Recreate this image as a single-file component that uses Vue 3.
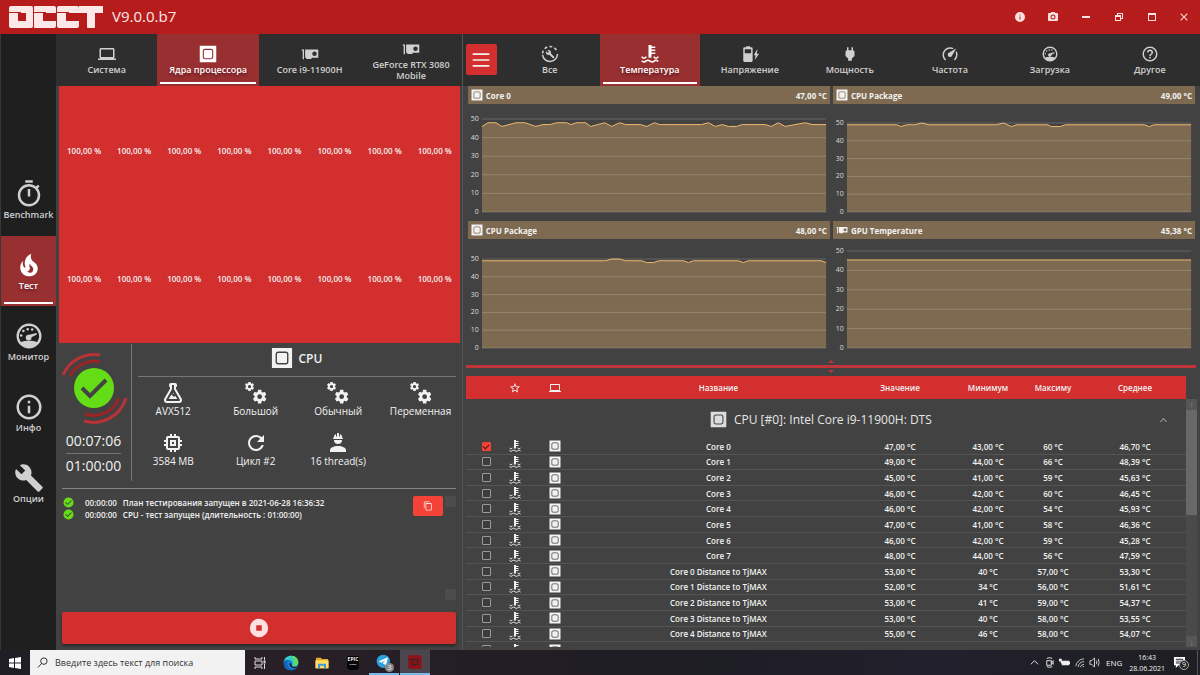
<script setup>
import { h } from 'vue'

const paths = {
  laptop: 'M4,6H20V16H4M20,18A2,2 0 0,0 22,16V6C22,4.89 21.1,4 20,4H4C2.89,4 2,4.89 2,6V16A2,2 0 0,0 4,18H0V20H24V18H20Z',
  card: 'M1,6V7.5H2.2V19H4V6M5.5,6V17H7V18.5H14V17H23V6H5.500M18,8.500A3,3 0 0,1 18,14.500A3,3 0 0,1 18,8.500Z',
  menu: 'M2,4H22V6H2ZM2,11H22V13H2ZM2,18H22V20H2Z',
  plug: 'M16,7V3H14V7H10V3H8V7H8C7,7 6,8 6,9V14.5L9.5,18V21H14.5V18L18,14.5V9C18,8 17,7 16,7Z',
  speed: 'M12,16A3,3 0 0,1 9,13C9,11.88 9.61,10.9 10.5,10.39L20.21,4.77L14.68,14.35C14.18,15.33 13.17,16 12,16M12,3C13.81,3 15.5,3.5 16.97,4.32L14.87,5.53C14,5.19 13,5 12,5A8,8 0 0,0 4,13C4,15.21 4.89,17.21 6.34,18.65H6.35C6.74,19.04 6.74,19.67 6.35,20.06C5.96,20.45 5.32,20.45 4.93,20.07V20.07C3.12,18.26 2,15.76 2,13A10,10 0 0,1 12,3M22,13C22,15.76 20.88,18.26 19.07,20.07V20.07C18.68,20.45 18.05,20.45 17.66,20.06C17.27,19.67 17.27,19.04 17.66,18.65V18.65C19.11,17.2 20,15.21 20,13C20,12 19.81,11 19.46,10.1L20.67,8C21.5,9.5 22,11.18 22,13Z',
  help: 'M11,18H13V16H11V18M12,2A10,10 0 0,0 2,12A10,10 0 0,0 12,22A10,10 0 0,0 22,12A10,10 0 0,0 12,2M12,20C7.59,20 4,16.41 4,12C4,7.59 7.59,4 12,4C16.41,4 20,7.59 20,12C20,16.41 16.41,20 12,20M12,6A4,4 0 0,0 8,10H10A2,2 0 0,1 12,8A2,2 0 0,1 14,10C14,12 11,11.75 11,15H13C13,12.75 16,12.5 16,10A4,4 0 0,0 12,6Z',
  battery: 'M5,3H7V1.500H12V3H14A1.500,1.500 0 0,1 15.500,4.500V21A1.500,1.500 0 0,1 14,22.500H4.500A1.500,1.500 0 0,1 3,21V4.500A1.500,1.500 0 0,1 4.500,3M5,5.500V11H13.500V5.500ZM22,5L17,13.500H19.500L18.500,20L24,11.500H21Z',
  fire: 'M17.66 11.2C17.43 10.9 17.15 10.64 16.89 10.38C16.22 9.78 15.46 9.35 14.82 8.72C13.33 7.26 13 4.85 13.95 3C13 3.23 12.17 3.75 11.46 4.32C8.87 6.4 7.85 10.07 9.07 13.22C9.11 13.32 9.15 13.42 9.15 13.55C9.15 13.77 9 13.97 8.8 14.05C8.57 14.15 8.33 14.09 8.14 13.93C8.08 13.88 8.04 13.83 8 13.76C6.87 12.33 6.69 10.28 7.45 8.64C5.78 10 4.87 12.3 5 14.47C5.06 14.97 5.12 15.47 5.29 15.97C5.43 16.57 5.7 17.17 6 17.7C7.08 19.43 8.95 20.67 10.96 20.92C13.1 21.19 15.39 20.8 17.03 19.32C18.86 17.66 19.5 15 18.56 12.72L18.43 12.46C18.22 12 17.66 11.2 17.66 11.2M14.5 17.5C14.22 17.74 13.76 18 13.4 18.1C12.28 18.5 11.16 17.94 10.5 17.28C11.69 17 12.4 16.12 12.61 15.23C12.78 14.43 12.46 13.77 12.33 13C12.21 12.26 12.23 11.63 12.5 10.94C12.69 11.32 12.89 11.7 13.13 12C13.9 13 15.11 13.44 15.37 14.8C15.41 14.94 15.43 15.08 15.43 15.23C15.46 16.05 15.1 16.95 14.5 17.5Z',
  timer: 'M12,20A7,7 0 0,1 5,13A7,7 0 0,1 12,6A7,7 0 0,1 19,13A7,7 0 0,1 12,20M19.03,7.39L20.45,5.97C20,5.46 19.55,5 19.04,4.56L17.62,6C16.07,4.74 14.12,4 12,4A9,9 0 0,0 3,13A9,9 0 0,0 12,22C17,22 21,17.97 21,13C21,10.88 20.26,8.93 19.03,7.39M11,14H13V8H11M15,1H9V3H15V1Z',
  wrench: 'M22.7,19L13.6,9.9C14.5,7.6 14,4.9 12.1,3C10.1,1 7.1,0.6 4.7,1.7L9,6L6,9L1.6,4.7C0.4,7.1 0.9,10.1 2.9,12.1C4.8,14 7.5,14.5 9.8,13.6L18.9,22.7C19.3,23.1 19.9,23.1 20.3,22.7L22.6,20.4C23.1,20 23.1,19.3 22.7,19Z',
  infoOutline: 'M11,9H13V7H11M12,20C7.59,20 4,16.41 4,12C4,7.59 7.59,4 12,4C16.41,4 20,7.59 20,12C20,16.41 16.41,20 12,20M12,2A10,10 0 0,0 2,12A10,10 0 0,0 12,22A10,10 0 0,0 22,12A10,10 0 0,0 12,2M11,17H13V11H11V17Z',
  info: 'M13,9H11V7H13M13,17H11V11H13M12,2A10,10 0 0,0 2,12A10,10 0 0,0 12,22A10,10 0 0,0 22,12A10,10 0 0,0 12,2Z',
  camera: 'M4,4H7L9,2H15L17,4H20A2,2 0 0,1 22,6V18A2,2 0 0,1 20,20H4A2,2 0 0,1 2,18V6A2,2 0 0,1 4,4M12,7A5,5 0 0,0 7,12A5,5 0 0,0 12,17A5,5 0 0,0 17,12A5,5 0 0,0 12,7M12,9A3,3 0 0,1 15,12A3,3 0 0,1 12,15A3,3 0 0,1 9,12A3,3 0 0,1 12,9Z',
  minimize: 'M20,14H4V10H20Z',
  restore: 'M4,8H8V4H20V16H16V20H4V8M16,8V14H18V6H10V8H16M6,12V18H14V12H6Z',
  maximize: 'M4,4H20V20H4V4M6,8V18H18V8H6Z',
  close: 'M13.46,12L19,17.54V19H17.54L12,13.46L6.46,19H5V17.54L10.54,12L5,6.46V5H6.46L12,10.54L17.54,5H19V6.46L13.46,12Z',
  cog: 'M12,15.5A3.5,3.5 0 0,1 8.5,12A3.5,3.5 0 0,1 12,8.5A3.5,3.5 0 0,1 15.5,12A3.5,3.5 0 0,1 12,15.5M19.43,12.97C19.47,12.65 19.5,12.33 19.5,12C19.5,11.67 19.47,11.34 19.43,11L21.54,9.37C21.73,9.22 21.78,8.95 21.66,8.73L19.66,5.27C19.54,5.05 19.27,4.96 19.05,5.05L16.56,6.05C16.04,5.66 15.5,5.32 14.87,5.07L14.5,2.42C14.46,2.18 14.25,2 14,2H10C9.75,2 9.54,2.18 9.5,2.42L9.13,5.07C8.5,5.32 7.96,5.66 7.44,6.05L4.95,5.05C4.73,4.96 4.46,5.05 4.34,5.27L2.34,8.73C2.21,8.95 2.27,9.22 2.46,9.37L4.57,11C4.53,11.34 4.5,11.67 4.5,12C4.5,12.33 4.53,12.65 4.57,12.97L2.46,14.63C2.27,14.78 2.21,15.05 2.34,15.27L4.34,18.73C4.46,18.95 4.73,19.03 4.95,18.95L7.44,17.94C7.96,18.34 8.5,18.68 9.13,18.93L9.5,21.58C9.54,21.82 9.75,22 10,22H14C14.25,22 14.46,21.82 14.5,21.58L14.87,18.93C15.5,18.67 16.04,18.34 16.56,17.94L19.05,18.95C19.27,19.03 19.54,18.95 19.66,18.73L21.66,15.27C21.78,15.05 21.73,14.78 21.54,14.63L19.43,12.97Z',
  flask: 'M5,19A1,1 0 0,0 6,20H18A1,1 0 0,0 19,19C19,18.79 18.93,18.59 18.82,18.43L13,8.35V4H11V8.35L5.18,18.43C5.07,18.59 5,18.79 5,19M6,22A3,3 0 0,1 3,19C3,18.4 3.18,17.84 3.5,17.37L9,7.81V6A1,1 0 0,1 8,5V4A2,2 0 0,1 10,2H14A2,2 0 0,1 16,4V5A1,1 0 0,1 15,6V7.81L20.5,17.37C20.82,17.84 21,18.4 21,19A3,3 0 0,1 18,22H6M13,16L14.34,14.66L16.27,18H7.73L10.39,13.39L13,16M12.5,12A0.5,0.5 0 0,1 13,12.5A0.5,0.5 0 0,1 12.5,13A0.5,0.5 0 0,1 12,12.5A0.5,0.5 0 0,1 12.5,12Z',
  chip: 'M17,17H7V7H17M21,11V9H19V7C19,5.89 18.1,5 17,5H15V3H13V5H11V3H9V5H7C5.89,5 5,5.89 5,7V9H3V11H5V13H3V15H5V17A2,2 0 0,0 7,19H9V21H11V19H13V21H15V19H17A2,2 0 0,0 19,17V15H21V13H19V11M13,13H11V11H13M15,9H9V15H15V9Z',
  refresh: 'M17.65,6.35C16.2,4.9 14.21,4 12,4A8,8 0 0,0 4,12A8,8 0 0,0 12,20C15.73,20 18.84,17.45 19.73,14H17.65C16.83,16.33 14.61,18 12,18A6,6 0 0,1 6,12A6,6 0 0,1 12,6C13.66,6 15.14,6.69 16.22,7.78L13,11H20V4L17.65,6.35Z',
  worker: 'M12,15C7.58,15 4,16.79 4,19V21H20V19C20,16.79 16.42,15 12,15M8,9A4,4 0 0,0 12,13A4,4 0 0,0 16,9M11.5,2C11.2,2 11,2.21 11,2.5V5.5H10V3C10,3 7.75,3.86 7.75,6.75C7.75,6.75 7,6.89 7,8H17C16.95,6.89 16.25,6.75 16.25,6.75C16.25,3.86 14,3 14,3V5.5H13V2.5C13,2.21 12.81,2 12.5,2H11.5Z',
  star: 'M12,15.39L8.24,17.66L9.23,13.38L5.91,10.5L10.29,10.13L12,6.09L13.71,10.13L18.09,10.5L14.77,13.38L15.76,17.66M22,9.24L14.81,8.63L12,2L9.19,8.63L2,9.24L7.45,13.97L5.82,21L12,17.27L18.18,21L16.54,13.97L22,9.24Z',
  copy: 'M19,21H8V7H19M19,5H8A2,2 0 0,0 6,7V21A2,2 0 0,0 8,23H19A2,2 0 0,0 21,21V7A2,2 0 0,0 19,5M16,1H4A2,2 0 0,0 2,3V17H4V3H16V1Z',
  stop: 'M12,2A10,10 0 0,0 2,12A10,10 0 0,0 12,22A10,10 0 0,0 22,12A10,10 0 0,0 12,2M9,9H15V15H9Z',
  cpu: 'M1,1H23V23H1ZM8,5A3,3 0 0,0 5,8V16A3,3 0 0,0 8,19H16A3,3 0 0,0 19,16V8A3,3 0 0,0 16,5ZM8,6.500H16A1.500,1.500 0 0,1 17.500,8V16A1.500,1.500 0 0,1 16,17.500H8A1.500,1.500 0 0,1 6.500,16V8A1.500,1.500 0 0,1 8,6.500Z',
  check: 'M12,1A11,11 0 1,0 12,23A11,11 0 1,0 12,1M5,12.500L6.500,11L10,14.500L17.500,7L19,8.500L10,17.500Z',
}

const stroke = (d, width = 2) => h('path', { d, fill: 'none', stroke: 'currentColor', 'stroke-width': width })

const special = {
  temp: () => [
    h('path', { d: 'M10,0H14V2H19V4H14V6H19V8H14V10H19V12H14V17H10Z' }),
    stroke('M1,15.500C3,18.500 5,18.500 7,15.500M17,15.500C19,18.500 21,18.500 23,15.500'),
    stroke('M1,21C3,23 5,23 6.500,21.500S10,20 12,21.500S16,23 17.500,21.500S21,20 23,22'),
  ],
  all: () => [
    h('circle', { cx: 12, cy: 12, r: 10, fill: 'none', stroke: 'currentColor', 'stroke-width': 2, 'stroke-dasharray': '30 2 4 3 4 3 4 3 4 6' }),
    h('path', { d: paths.wrench, transform: 'translate(6 6) scale(.52)' }),
  ],
  gauge: () => [
    h('path', { d: 'M12,2A10,10 0 1,0 12,22A10,10 0 1,0 12,2M12,4A8,8 0 0,1 18.500,16.700C15,15.500 9,15.500 5.500,16.700A8,8 0 0,1 12,4Z' }),
    h('path', { d: 'M12,11L18,9.500L18.300,10.800L14,13A2.300,2.300 0 1,1 12,11Z' }),
    ...[[5.7, 11.500], [7.500, 8], [11, 6.500], [14.500, 6.700]].map(([cx, cy]) => h('circle', { cx, cy, r: 1 })),
  ],
  cogs: () => [
    h('path', { d: paths.cog, transform: 'translate(0 0) scale(.46)' }),
    h('path', { d: paths.cog, transform: 'translate(7.500 7.500) scale(.68)' }),
  ],
}

const Icon = (props) =>
  h('svg', { viewBox: '0 0 24 24', fill: 'currentColor', 'fill-rule': 'evenodd', 'aria-hidden': 'true' },
    special[props.name] ? special[props.name]() : [h('path', { d: paths[props.name] })])
Icon.props = ['name']

const windowButtons = [
  ['info', 'О программе'], ['camera', 'Снимок экрана'], ['minimize', 'Свернуть'],
  ['restore', 'Компактный вид'], ['maximize', 'Развернуть'], ['close', 'Закрыть'],
]
const sideItems = [
  { icon: 'timer', label: 'Benchmark' },
  { icon: 'fire', label: 'Тест', active: true },
  { icon: 'gauge', label: 'Монитор' },
  { icon: 'infoOutline', label: 'Инфо' },
  { icon: 'wrench', label: 'Опции' },
]
const sourceTabs = [
  { icon: 'laptop', label: 'Система' },
  { icon: 'cpu', label: 'Ядра процессора', active: true },
  { icon: 'card', label: 'Core i9-11900H' },
  { icon: 'card', label: 'GeForce RTX 3080 Mobile' },
]
const sensorTabs = [
  { icon: 'all', label: 'Все' },
  { icon: 'temp', label: 'Температура', active: true },
  { icon: 'battery', label: 'Напряжение' },
  { icon: 'plug', label: 'Мощность' },
  { icon: 'speed', label: 'Частота' },
  { icon: 'gauge', label: 'Загрузка' },
  { icon: 'help', label: 'Другое' },
]
const loads = Array(16).fill('100,00 %')
const facts = [
  { icon: 'flask', label: 'AVX512' },
  { icon: 'cogs', label: 'Большой' },
  { icon: 'cogs', label: 'Обычный' },
  { icon: 'cogs', label: 'Переменная' },
  { icon: 'chip', label: '3584 MB' },
  { icon: 'refresh', label: 'Цикл #2' },
  { icon: 'worker', label: '16 thread(s)' },
]
const logs = [
  'План тестирования запущен в 2021-06-28 16:36:32',
  'CPU - тест запущен (длительность : 01:00:00)',
]
const ticks = [50, 40, 30, 20, 10, 0]

// Each line is a list of [x, degrees] knots over a 345-unit wide plot.
const charts = [
  { icon: 'cpu', title: 'Core 0', value: '47,00 °C', size: 'a', line: [[0, 46], [6, 48], [14, 48], [20, 46], [34, 48], [43, 48], [54, 46], [61, 47], [68, 47], [75, 48], [85, 48], [89, 47], [95, 48], [104, 48], [109, 46], [116, 47], [123, 48], [130, 46], [138, 48], [144, 47], [159, 47], [165, 46], [173, 48], [178, 47], [220, 47], [227, 48], [234, 46], [241, 47], [247, 46], [255, 46], [261, 47], [284, 47], [290, 46], [297, 48], [304, 46], [324, 48], [331, 47], [345, 47]] },
  { icon: 'cpu', title: 'CPU Package', value: '49,00 °C', size: 'b', line: [[0, 49], [50, 49], [54, 48], [60, 49], [68, 49], [75, 50], [82, 49], [150, 49], [157, 50], [165, 48], [170, 49], [201, 49], [205, 48], [214, 48], [219, 49], [298, 49], [303, 48], [308, 49], [345, 49]] },
  { icon: 'cpu', title: 'CPU Package', value: '48,00 °C', size: 'c', line: [[0, 49], [124, 49], [130, 50], [138, 50], [144, 49], [160, 49], [165, 48], [172, 48], [177, 49], [202, 49], [207, 48], [212, 49], [257, 49], [262, 48], [267, 49], [340, 49], [345, 48]] },
  { icon: 'card', title: 'GPU Temperature', value: '45,38 °C', size: 'd', line: [[0, 45.38], [345, 45.38]] },
]
const points = (line) => line.map(([x, v]) => `${x},${50 - v}`).join(' ')

const rows = [
  ['Core 0', '47,00 °C', '43,00 °C', '60 °C', '46,70 °C'],
  ['Core 1', '49,00 °C', '44,00 °C', '66 °C', '48,39 °C'],
  ['Core 2', '45,00 °C', '41,00 °C', '59 °C', '45,63 °C'],
  ['Core 3', '46,00 °C', '42,00 °C', '60 °C', '46,45 °C'],
  ['Core 4', '46,00 °C', '42,00 °C', '54 °C', '45,93 °C'],
  ['Core 5', '47,00 °C', '41,00 °C', '58 °C', '46,36 °C'],
  ['Core 6', '46,00 °C', '42,00 °C', '59 °C', '45,28 °C'],
  ['Core 7', '48,00 °C', '44,00 °C', '56 °C', '47,59 °C'],
  ['Core 0 Distance to TjMAX', '53,00 °C', '40 °C', '57,00 °C', '53,30 °C'],
  ['Core 1 Distance to TjMAX', '52,00 °C', '34 °C', '56,00 °C', '51,61 °C'],
  ['Core 2 Distance to TjMAX', '53,00 °C', '41 °C', '59,00 °C', '54,37 °C'],
  ['Core 3 Distance to TjMAX', '53,00 °C', '40 °C', '58,00 °C', '53,55 °C'],
  ['Core 4 Distance to TjMAX', '55,00 °C', '46 °C', '58,00 °C', '54,07 °C'],
  ['', '', '', '', ''],
]
</script>

<template>
  <div class="desktop">
    <header class="titlebar">
      <svg class="logo" viewBox="0 0 94 22" role="img" aria-label="OCCT">
        <g fill="#fde8e8">
          <rect x="0" y="0" width="24" height="22" rx="2" />
          <rect x="24" y="0" width="23" height="22" rx="2" />
          <rect x="48" y="0" width="22" height="22" rx="2" />
          <rect x="70" y="0" width="24" height="7" />
          <rect x="78" y="0" width="8" height="22" rx="1" />
        </g>
        <g fill="#b71c1c">
          <rect x="0" y="6" width="12" height="1" />
          <rect x="9" y="7" width="8" height="8" />
          <rect x="24" y="0" width="1" height="22" />
          <rect x="25" y="6" width="12" height="1" />
          <rect x="34" y="7" width="13" height="8" />
          <rect x="47" y="0" width="1" height="22" />
          <rect x="48" y="6" width="12" height="1" />
          <rect x="57" y="7" width="13" height="8" />
        </g>
      </svg>
      <h1>V9.0.0.b7</h1>
      <div class="window-buttons">
        <button v-for="[icon, label] in windowButtons" :key="icon" type="button" :aria-label="label"><Icon :name="icon" /></button>
      </div>
    </header>

    <main class="workspace">
      <nav class="sidebar">
        <button v-for="item in sideItems" :key="item.label" type="button" class="tab" :class="{ active: item.active }">
          <Icon :name="item.icon" /><span>{{ item.label }}</span>
        </button>
      </nav>

      <section class="test-panel">
        <nav class="tabs">
          <button v-for="tab in sourceTabs" :key="tab.label" type="button" class="tab" :class="{ active: tab.active }">
            <Icon :name="tab.icon" /><span>{{ tab.label }}</span>
          </button>
        </nav>
        <div class="loads"><span v-for="(load, i) in loads" :key="i">{{ load }}</span></div>

        <div class="status">
          <div class="progress">
            <svg class="spinner" viewBox="-34 -36 68 72" aria-hidden="true">
              <g fill="none" stroke-width="3">
                <path d="M-31,-13A34,34 0 0,1 6,-33M32,10A34,34 0 0,1 -10,33" stroke="#b93237" />
                <path d="M-24,-12A27,27 0 0,1 6,-26M25,10A27,27 0 0,1 -9,26" stroke="#9a2428" />
              </g>
              <circle r="20" fill="#64dd17" />
              <path d="M-12,0L-4,8L12,-8" fill="none" stroke="#424242" stroke-width="4" />
            </svg>
            <time>00:07:06</time>
            <time class="total">01:00:00</time>
          </div>
          <div class="details">
            <h2><Icon name="cpu" />CPU</h2>
            <ul class="facts">
              <li v-for="fact in facts" :key="fact.label"><Icon :name="fact.icon" /><span>{{ fact.label }}</span></li>
            </ul>
          </div>
        </div>

        <div class="log">
          <ul>
            <li v-for="entry in logs" :key="entry"><Icon name="check" /><time>00:00:00</time><span>{{ entry }}</span></li>
          </ul>
          <button type="button" class="copy" aria-label="Копировать"><Icon name="copy" /></button>
          <div class="faint-scroll"><i></i><i></i></div>
        </div>
        <button type="button" class="stop" aria-label="Остановить тест"><Icon name="stop" /></button>
      </section>

      <section class="monitor-panel">
        <div class="monitor-head">
          <button type="button" class="menu" aria-label="Меню"><Icon name="menu" /></button>
          <nav class="tabs">
            <button v-for="tab in sensorTabs" :key="tab.label" type="button" class="tab" :class="{ active: tab.active }">
              <Icon :name="tab.icon" /><span>{{ tab.label }}</span>
            </button>
          </nav>
        </div>

        <div class="charts">
          <article v-for="chart in charts" :key="chart.size" class="chart" :class="chart.size">
            <header><Icon :name="chart.icon" /><h3>{{ chart.title }}</h3><b>{{ chart.value }}</b></header>
            <div class="plot">
              <div class="ticks"><span v-for="t in ticks" :key="t">{{ t }}</span></div>
              <svg viewBox="0 0 345 50" preserveAspectRatio="none" aria-hidden="true">
                <polygon :points="`0,50 ${points(chart.line)} 345,50`" fill="#7d6a50" />
                <line v-for="t in ticks" :key="t" x1="0" x2="345" :y1="50 - t" :y2="50 - t" class="gridline" />
                <polyline :points="points(chart.line)" class="trace" />
              </svg>
            </div>
          </article>
        </div>

        <div class="splitter" role="separator"><i></i><i></i></div>

        <div class="sensors">
          <table>
            <colgroup><col class="c-check"><col class="c-fav"><col class="c-dev"><col><col class="c-val"><col class="c-min"><col class="c-max"><col class="c-avg"></colgroup>
            <thead>
              <tr>
                <th></th>
                <th><Icon name="star" /></th>
                <th><Icon name="laptop" /></th>
                <th>Название</th><th>Значение</th><th>Минимум</th><th>Максиму</th><th>Среднее</th>
              </tr>
            </thead>
            <tbody>
              <tr class="group">
                <td colspan="8">
                  <div><Icon name="cpu" /><span>CPU [#0]: Intel Core i9-11900H: DTS</span><button type="button" aria-label="Свернуть группу"></button></div>
                </td>
              </tr>
              <tr v-for="(row, i) in rows" :key="i">
                <td><input type="checkbox" :checked="i === 0" :aria-label="row[0]"></td>
                <td><Icon name="temp" /></td>
                <td><Icon name="cpu" /></td>
                <td v-for="(cell, j) in row" :key="j">{{ cell }}</td>
              </tr>
            </tbody>
          </table>
          <div class="scrollbar"><i>↑</i><b></b><i>↓</i></div>
        </div>
      </section>
    </main>

    <footer class="taskbar">
      <button type="button" class="start" aria-label="Пуск">
        <svg viewBox="0 0 12 12" fill="#fff"><path d="M0,2L5,1V5.500H0ZM6,1L12,0V5.500H6ZM0,6.500H5V11L0,10ZM6,6.500H12V12L6,11Z" /></svg>
      </button>
      <label class="search">
        <svg viewBox="0 0 12 12" fill="none" stroke="#222" aria-hidden="true"><circle cx="7.500" cy="4.500" r="3.500" /><path d="M5,7L1,11.500" /></svg>
        <input type="text" placeholder="Введите здесь текст для поиска" aria-label="Поиск">
      </label>
      <div class="apps">
        <button type="button" aria-label="Представление задач">
          <svg viewBox="0 0 12 12" fill="none" stroke="#ddd"><path d="M1,0V2H8V0M1,12V10H8V12M1,4H8V8H1ZM10.500,0V3M10.500,7V12" /><rect x="10" y="4" width="1" height="2" /></svg>
        </button>
        <button type="button" aria-label="Edge">
          <svg class="large" viewBox="0 0 24 24">
            <circle cx="12" cy="12" r="11" fill="#1683d8" />
            <path d="M1,11C2,4 7,1 12,1C19,1 23,6 23,11C23,15 20,17 16.500,17C13,17 13,15 14,13C15,10 12,7 8,7C4,7 2,9 1,11Z" fill="#38cfc2" />
            <path d="M13,1C19,1 23,6 23,11C23,15 20,17 16.500,17C18,12 16,5 13,1Z" fill="#64d85a" />
            <path d="M1,12C2,8 5,7 8,8C5,11 6,18 12,21C15,22 18,21 20,19C15,25 1,25 1,12Z" fill="#1264b8" />
            <path d="M10,12C9,16 12,20 18,20C20,19 21,18 21.500,17C17,19 12,18 13,13Z" fill="#241f28" />
          </svg>
        </button>
        <button type="button" aria-label="Проводник">
          <svg class="large" viewBox="0 0 24 24"><path d="M3,4H10L12,6H21V20H3Z" fill="#e8a923" /><path d="M2,8H22V20H2Z" fill="#ffdb67" /><path d="M6,20V13H18V20H15V16H9V20Z" fill="#4198d5" /></svg>
        </button>
        <button type="button" class="epic" aria-label="Epic Games"><span>EPIC<small>GAMES</small></span></button>
        <button type="button" class="running telegram" aria-label="Telegram">
          <svg class="large" viewBox="0 0 24 24"><circle cx="11" cy="11" r="10" fill="#2ba0da" /><path d="M4,11L18,5L15,17L10,14L14,9L8,13Z" fill="#fff" /></svg>
          <em>3</em>
        </button>
        <button type="button" class="running current" aria-label="OCCT">
          <svg class="large" viewBox="0 0 24 24"><rect x="2" y="2" width="20" height="20" rx="2" fill="#8f1016" /><path d="M2,8.500H16V16H8V11" fill="none" stroke="#34272c" stroke-width="2" /></svg>
        </button>
      </div>
      <div class="tray">
        <svg viewBox="0 0 12 12" fill="none" stroke="#eee"><path d="M2,8L6,4L10,8" /></svg>
        <svg viewBox="0 0 12 12" fill="none" stroke="#eee"><path d="M3,1.500Q6,0 9,1.500M3,10.500Q6,12 9,10.500M3,4H8V9H3ZM8,6L10,4V8Z" /></svg>
        <svg viewBox="0 0 12 12" fill="#eee"><path d="M0,2H3V4H11V5H12V8H11V9H3V7H2V5H0Z" /></svg>
        <svg viewBox="0 0 12 12" fill="none" stroke="#ccc"><path d="M2,10A9,9 0 0,1 11,2M4.500,11A7,7 0 0,1 11,5M7,11A4,4 0 0,1 11,8M9.500,11L11,10" /></svg>
        <svg viewBox="0 0 12 12" fill="none" stroke="#ddd"><path d="M1,4H3L6,1V11L3,8H1ZM8,4Q9,6 8,8M10,2Q12,6 10,10" /></svg>
        <span class="lang">ENG</span>
        <time><span>16:43</span><span>28.06.2021</span></time>
        <button type="button" class="notes" aria-label="Уведомления">
          <svg viewBox="0 0 12 12" fill="#fff" fill-rule="evenodd"><path d="M0,0H12V9H5L2,12V9H0ZM2,2V3H10V2ZM2,4V5H10V4ZM2,6V7H8V6Z" /></svg>
          <em>9</em>
        </button>
      </div>
    </footer>
  </div>
</template>

<style>
html, body { margin: 0; background: #424242; }
</style>

<style scoped>
* { box-sizing: border-box; }
.desktop {
  height: 100vh;
  display: grid;
  grid-template-rows: 34px minmax(0, 1fr) 25px;
  overflow: hidden;
  color: #f2f2f2;
  font-family: "Open Sans", "Noto Sans", sans-serif;
  font-size: 9px;
}
button { border: 0; padding: 0; margin: 0; font: inherit; color: inherit; background: none; }
svg { display: block; flex: none; }
h1, h2, h3 { margin: 0; font-weight: 400; }
ul { margin: 0; padding: 0; list-style: none; }

.titlebar { display: flex; align-items: center; padding: 0 8px 0 9px; background: #b71c1c; }
.logo { width: 94px; height: 22px; }
.titlebar h1 { margin-left: 9px; font-size: 15px; line-height: 20px; padding-bottom: 2px; color: #fde8e8; }
.window-buttons { margin-left: auto; display: flex; color: #fde0e0; }
.window-buttons button { width: 32px; height: 34px; margin-left: 1px; display: grid; place-items: center; }
.window-buttons button:first-child { margin-left: 0; }
.window-buttons button:last-child { width: 16px; margin-left: 8px; }
.window-buttons svg { width: 12px; height: 12px; }

.workspace { display: grid; grid-template-columns: 56px minmax(0, 16fr) minmax(0, 29fr); min-height: 0; background: #424242; }
.tab { position: relative; display: flex; flex-direction: column; align-items: center; justify-content: center; color: #d0d0d0; }
.tab.active { background: #982f31; color: #fff; font-weight: 600; text-shadow: 0 2px 3px #0006; }
.tab.active::after { content: ""; position: absolute; left: 3px; right: 3px; bottom: 2px; height: 2px; background: #fff; }
.sidebar { display: flex; flex-direction: column; justify-content: center; gap: 1px; background: #1f1f1f; border-left: 1px solid #383838; }
.sidebar .tab { height: 70px; font-size: 9px; font-weight: 600; line-height: 12px; }
.sidebar svg { width: 30px; height: 30px; }

.tabs { display: flex; flex: none; min-width: 0; height: 52px; background: #2e2e2e; }
.monitor-head .tabs { flex: 1; }
.tabs .tab { flex: 1 1 0; min-width: 0; padding: 0 8px; font-size: 9px; font-weight: 600; line-height: 11px; }
.tabs .tab svg { width: 18px; height: 18px; margin-bottom: 1px; }

.test-panel { display: flex; flex-direction: column; min-height: 0; min-width: 0; border-right: 1px solid #555; }
.loads { display: grid; grid-template-columns: repeat(8, 1fr); grid-auto-rows: 1fr; place-items: center; height: 257px; margin: 0 2px 0 3px; background: #d32f2f; font-size: 8px; font-weight: 600; }
.status { display: flex; height: 138px; padding-top: 1px; }
.progress { width: 76px; padding-top: 8px; display: flex; flex-direction: column; align-items: center; border-right: 1px solid #757575; }
.spinner { width: 68px; height: 72px; margin-bottom: 5px; }
.progress time { font-size: 14px; line-height: 24px; }
.progress .total { border-top: 1px solid #757575; }
.details { flex: 1; min-width: 0; display: flex; flex-direction: column; }
.details h2 { display: flex; align-items: center; justify-content: center; gap: 5px; height: 36px; margin: 0 6px; padding-bottom: 4px; border-bottom: 1px solid #757575; font-size: 12px; font-weight: 600; }
.details h2 svg { width: 22px; height: 22px; }
.facts { display: grid; grid-template-columns: repeat(4, 1fr); grid-auto-rows: 50px; padding-top: 4px; font-size: 10px; line-height: 13px; }
.facts li { display: flex; flex-direction: column; align-items: center; }
.facts svg { width: 24px; height: 24px; }

.log { flex: 1; min-height: 0; display: flex; margin: 7px 6px 12px; padding-top: 7px; border-top: 1px solid #858585; font-size: 8px; font-weight: 600; }
.log ul { flex: 1; min-width: 0; padding-left: 1px; }
.log li { display: flex; align-items: center; height: 12px; white-space: nowrap; }
.log li svg { width: 11px; height: 11px; color: #64dd17; }
.log time { margin: 0 6px 0 11px; }
.copy { width: 30px; height: 20px; margin-right: 2px; display: grid; place-items: center; background: #f44336; border-radius: 2px; color: #fde0e0; }
.copy svg { width: 10px; height: 10px; }
.faint-scroll { display: flex; flex-direction: column; justify-content: space-between; }
.faint-scroll i { width: 11px; height: 11px; background: #4c4c4c; }
.stop { display: grid; place-items: center; height: 32px; margin: 0 6px 6px; background: #d32f2f; border-radius: 2px; box-shadow: 0 2px 3px #0006; color: #fde0e0; }
.stop svg { width: 22px; height: 22px; }

.monitor-panel { display: flex; flex-direction: column; min-width: 0; min-height: 0; padding-left: 3px; }
.monitor-head { display: flex; background: #2e2e2e; margin-left: -3px; padding-left: 3px; }
.menu { width: 31px; height: 31px; margin: 10px 3px 0 0; display: grid; place-items: center; background: #d32f2f; border-radius: 2px; }
.menu svg { width: 20px; height: 20px; }
.charts { display: grid; grid-template-columns: repeat(2, minmax(0, 1fr)); column-gap: 3px; margin: 0 5px 0 2px; }
.chart header { display: flex; align-items: center; height: 18px; padding: 0 3px; gap: 3px; background: #7d6a50; font-weight: 700; font-size: 8px; }
.chart header svg { width: 12px; height: 12px; }
.chart h3 { font: inherit; flex: 1; }
.chart b { font: inherit; }
.plot { display: flex; height: 117px; padding: 15px 4px 9px 0; }
.b .plot { padding-top: 19px; }
.c .plot { padding-top: 20px; }
.d .plot { padding-top: 12px; }
.c .plot, .d .plot { padding-bottom: 8px; }
.plot svg { flex: 1 1 0; width: 0; min-width: 0; height: 100%; overflow: visible; }
.ticks { display: flex; flex-direction: column; justify-content: space-between; width: 14px; margin: -5px 0; padding-right: 3px; text-align: right; font-size: 7px; line-height: 10px; color: #ddd; }
.gridline { stroke: #ffffff2e; stroke-width: 1; vector-effect: non-scaling-stroke; }
.trace { fill: none; stroke: #f0b870; stroke-width: 1; vector-effect: non-scaling-stroke; }

.splitter { position: relative; height: 3px; margin: 9px 4px 8px 0; background: #c0343a; }
.splitter i { position: absolute; left: 50%; top: -5px; margin-left: -3px; border: 3px solid transparent; border-top: 0; border-bottom-color: #c0343a; }
.splitter i + i { top: 5px; border-top: 3px solid #c0343a; border-bottom: 0; }

.sensors { flex: 1; min-height: 0; display: flex; overflow: hidden; margin: 0 3px 3px 0; }
table { flex: 1; table-layout: fixed; border-collapse: collapse; height: 282px; font-size: 8px; font-weight: 600; }
th, td { padding: 0; text-align: center; font-weight: 600; line-height: 11px; white-space: nowrap; }
.c-check { width: 34px; }
.c-fav { width: 30px; }
.c-dev { width: 61px; }
.c-val { width: 108px; }
.c-min { width: 68px; }
.c-max { width: 62px; }
.c-avg { width: 102px; }
thead tr { height: 23px; background: #d32f2f; }
th svg, td svg { width: 12px; height: 12px; margin: 0 auto; }
th:nth-child(3), tr:not(.group) td:nth-child(3) { padding-right: 11px; }
tbody tr:not(.group) { border-bottom: 1px solid #545454; }
.group { height: 40px; }
.group div { display: flex; align-items: center; justify-content: center; gap: 7px; position: relative; padding-right: 10px; font-size: 12px; font-weight: 400; color: #e6e6e6; }
.group svg { width: 17px; height: 17px; margin: 0; color: #ddd; }
.group button { position: absolute; right: 20px; top: 8px; width: 5px; height: 5px; border: solid #999; border-width: 1px 0 0 1px; rotate: 45deg; }
td input { appearance: none; display: block; width: 9px; height: 9px; margin: 0 9px 0 auto; border: 1px solid #9a9a9a; border-radius: 1px; background: #3c3c3c; }
td input:checked { border-color: #f44336; background: #f44336; display: grid; place-items: center; }
td input:checked::after { content: ""; width: 5px; height: 3px; border: solid #5a1010; border-width: 0 0 1px 1px; rotate: -45deg; }
.scrollbar { width: 11px; margin-top: 23px; display: flex; flex-direction: column; justify-content: space-between; background: #4a4a4a; }
.scrollbar i { height: 11px; background: #565656; color: #858585; font-style: normal; font-size: 8px; line-height: 11px; text-align: center; }
.scrollbar b { height: 105px; margin-bottom: auto; background: #686868; }

.taskbar { display: flex; background: linear-gradient(90deg, #201f26, #291f27 25%, #1d1d23 55%, #21202c 78%, #1e1f22); }
.start { width: 30px; display: grid; place-items: center; }
.start svg { width: 12px; height: 12px; }
.search { display: flex; align-items: center; gap: 7px; width: 215px; padding-left: 7px; background: #f2f2f2; }
.search svg { width: 11px; height: 11px; }
.search input { flex: 1; min-width: 0; border: 0; padding: 0; background: none; font: 9px "Open Sans", "Noto Sans", sans-serif; }
.search input::placeholder { color: #333; opacity: 1; }
.apps { display: flex; gap: 1px; }
.apps button { position: relative; width: 30px; display: grid; place-items: center; }
.apps svg { width: 12px; height: 12px; }
.apps svg.large { width: 16px; height: 16px; }
.epic span { display: block; width: 12px; height: 14px; background: #050505; border-radius: 1px 1px 4px 4px; font: 700 5px/7px "Open Sans", sans-serif; }
.epic small { display: block; font-size: 2px; line-height: 3px; }
.running { border-bottom: 2px solid #76b9ed; }
.current { background: #4b464e; }
.apps em { position: absolute; right: 5px; bottom: 1px; width: 9px; height: 9px; border-radius: 50%; background: #888; font: 7px/9px "Open Sans", sans-serif; text-align: center; }
.tray { margin-left: auto; display: flex; align-items: center; padding-right: 2px; }
.tray > svg { width: 11px; height: 11px; margin-right: 4px; }
.lang { margin: 0 7px 0 2px; font-size: 8px; }
.tray time { display: flex; flex-direction: column; align-items: center; font-size: 7px; line-height: 11px; }
.notes { position: relative; margin: 0 8px 0 9px; padding-right: 4px; }
.notes svg { width: 11px; height: 11px; }
.notes em { position: absolute; right: 0; top: 3px; width: 10px; height: 10px; border: 1px solid #aaa; border-radius: 50%; background: #222; font: 7px/8px "Open Sans", sans-serif; }
.tray::after { content: ""; width: 1px; align-self: stretch; background: #555; }
</style>
